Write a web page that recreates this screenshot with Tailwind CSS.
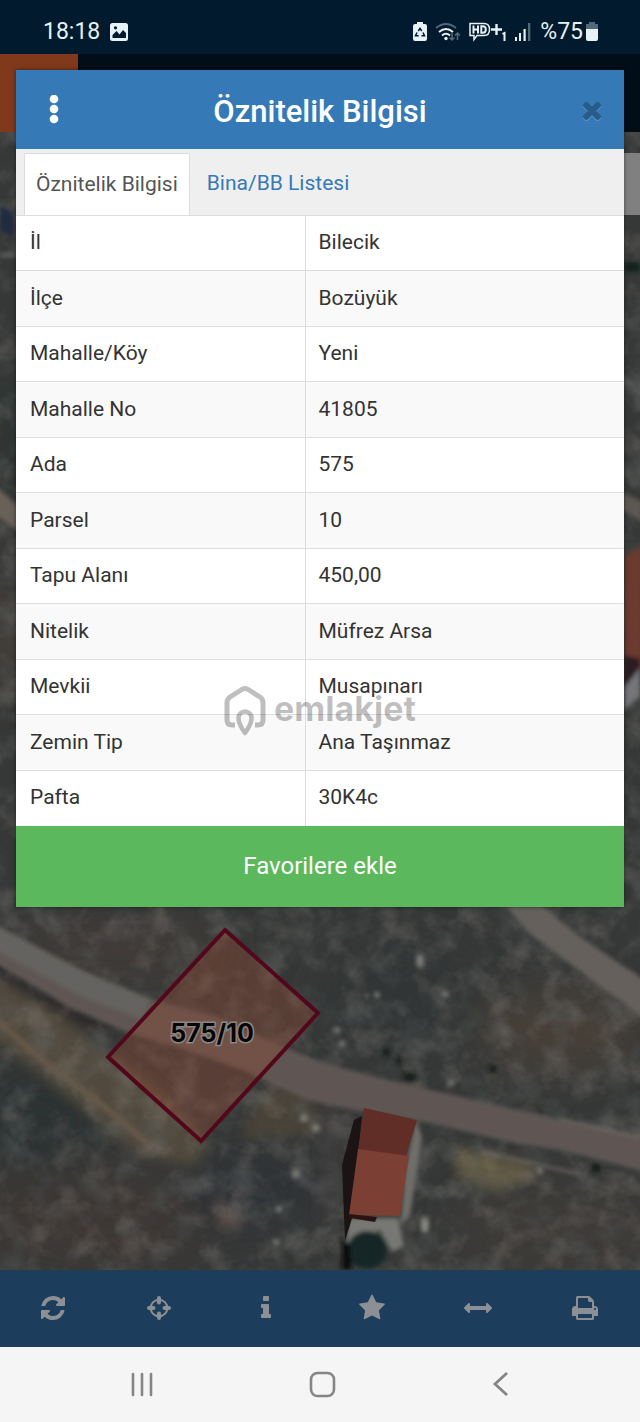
<!DOCTYPE html>
<html lang="tr">
  <head>
    <meta charset="UTF-8" />
    <meta name="viewport" content="width=device-width, initial-scale=1.0" />
    <script src="https://cdn.jsdelivr.net/npm/@tailwindcss/browser@4"></script>
    <title>Öznitelik Bilgisi</title>
  </head>
  <body class="relative min-h-screen flex flex-col bg-[#343635] font-[Roboto,sans-serif]">
    <!-- Status bar -->
    <header class="h-[54px] bg-[#011a2d] text-[#e8f1f6] flex items-center justify-between pl-[43px] pr-[42px] pt-[10px]">
      <div class="flex items-center gap-[10px]">
        <span class="text-[23px] leading-6">18:18</span>
        <svg class="w-[18px] h-[18px]" viewBox="0 0 18 18">
          <rect width="18" height="18" rx="2.500" fill="#e8f1f6" />
          <path d="M2.500 15v-3l4-4 3 3.500 3.500-4.500 3 3v5z" fill="#011a2d" />
          <circle cx="5.500" cy="4.800" r="1.600" fill="#011a2d" />
        </svg>
      </div>
      <div class="flex items-center">
        <svg class="w-[14px] h-[20px] mr-[8px]" viewBox="0 0 14 20">
          <path d="M4 0h6v2h2a2 2 0 0 1 2 2v13a2 2 0 0 1-2 2H2a2 2 0 0 1-2-2V4a2 2 0 0 1 2-2h2z" fill="#e8f1f6" />
          <path d="M5.300 9l1.700-2.700 1.700 2.700M10 10.500l1.500 3.200H8.500M5.700 13.700H2.500L4 10.500" fill="none" stroke="#011a2d" stroke-width="1.500" />
        </svg>
        <svg class="w-[26px] h-[20px] mr-[8px]" viewBox="0 0 26 20" fill="none" stroke-width="2">
          <path d="M1 6q10-8 20 0" stroke="#52697a" />
          <path d="M4 10q7-6 14 0M7 13.500q4-3.500 8 0" stroke="#e8f1f6" />
          <circle cx="11" cy="16.500" r="1.700" fill="#e8f1f6" />
          <path d="M17 11v7M14.500 15.500l2.500 2.500 2.500-2.500M22.500 18v-7M20 13.500l2.500-2.500 2.500 2.500" stroke="#52697a" stroke-width="1.500" />
        </svg>
        <svg class="w-[38px] h-[20px] mr-[7px]" viewBox="0 0 38 20" fill="none" stroke="#e8f1f6" stroke-width="1.500">
          <path d="M1 1.500h14q5.500 0 5.500 6t-5.500 6H8l-3 4v-4H1z" />
          <path d="M4.500 3.500v8M9 3.500v8M4.500 7.500H9M12.300 4.300v6.400h1.500q3 0 3-3.200t-3-3.200z" stroke-width="2" />
          <path d="M22 7.500h11M27.500 2v11" stroke-width="2.400" />
          <path d="M33.500 12l2-1v8" stroke-width="2" />
        </svg>
        <svg class="w-[17px] h-[20px] mr-[9px]" viewBox="0 0 17 20">
          <path d="M1 15h2v4H1zM5 11h2v8H5zM9.500 7h2.200v12H9.500z" fill="#e8f1f6" />
          <path d="M14 1h2.300v18H14z" fill="#52697a" />
        </svg>
        <span class="text-[23px] leading-6 mr-[3px]">%75</span>
        <svg class="w-[12px] h-[20px]" viewBox="0 0 12 20">
          <path d="M3 0h6v2h3v5H0V2h3z" fill="#52697a" />
          <path d="M0 7h12v10a2 2 0 0 1-2 2H2a2 2 0 0 1-2-2z" fill="#e8f1f6" />
        </svg>
      </div>
    </header>

    <!-- App bar, dimmed behind the dialog -->
    <div class="h-[78px] bg-[#010e18] flex">
      <div class="w-[78px] bg-[#80391b]"></div>
    </div>

    <!-- Map -->
    <main class="relative flex-1">
      <svg class="block w-full h-full" viewBox="0 132 640 1138" preserveAspectRatio="xMidYMid slice">
        <defs>
          <filter id="soft" x="-20%" y="-20%" width="140%" height="140%"><feGaussianBlur stdDeviation="2" /></filter>
          <filter id="scrub" x="-20%" y="-20%" width="140%" height="140%"><feGaussianBlur stdDeviation="6" /></filter>
          <filter id="haze" x="-50%" y="-50%" width="200%" height="200%"><feGaussianBlur stdDeviation="22" /></filter>
          <filter id="light" x="0" y="0" width="100%" height="100%">
            <feTurbulence type="fractalNoise" baseFrequency="0.035" numOctaves="4" seed="7" />
            <feColorMatrix values="0 0 0 0 .4  0 0 0 0 .36  0 0 0 0 .32  1.4 0 0 0 -.65" />
          </filter>
          <filter id="dark" x="0" y="0" width="100%" height="100%">
            <feTurbulence type="fractalNoise" baseFrequency="0.035" numOctaves="4" seed="21" />
            <feColorMatrix values="0 0 0 0 .12  0 0 0 0 .14  0 0 0 0 .14  1.6 0 0 0 -.75" />
          </filter>
        </defs>
        <rect y="132" width="640" height="1138" fill="#363837" />
        <g filter="url(#haze)">
          <ellipse cx="120" cy="950" rx="110" ry="35" fill="#3f3a38" />
          <ellipse cx="560" cy="1030" rx="80" ry="40" fill="#464139" />
          <ellipse cx="400" cy="1000" rx="80" ry="60" fill="#323635" />
          <ellipse cx="40" cy="1120" rx="60" ry="50" fill="#2c3233" />
          <ellipse cx="90" cy="1220" rx="120" ry="50" fill="#3d3835" />
          <ellipse cx="250" cy="1190" rx="70" ry="40" fill="#2e3335" />
          <ellipse cx="560" cy="1230" rx="110" ry="50" fill="#3e3b38" />
          <ellipse cx="0" cy="640" rx="16" ry="60" fill="#4b423a" />
          <ellipse cx="0" cy="440" rx="16" ry="60" fill="#26302f" />
        </g>
        <!-- scrub -->
        <g filter="url(#scrub)">
          <path d="M-14 974l69 40 60 42 50 36 44 50-14 24-59-12-50-42-54-44-46-34z" fill="#51483c" />
          <path d="M450 1146l30 8 50 8 4 14-36 16-38-14z" fill="#5e5741" />
          <path d="M260 1090l40-14 22 50-30 12-50 0z" fill="#484239" />
          <path d="M323 1105l24 12-9 75-18 30z" fill="#3c3b3a" />
          <path d="M215 1200l12 6 14 20-8 6-16-12z" fill="#5b4d46" />
          <path d="M-10 956l56 24 50 30 15 14-6 12-40-18-75-46z" fill="#2d2c2a" />
        </g>
        <rect y="132" width="640" height="1138" filter="url(#light)" opacity=".45" />
        <rect y="132" width="640" height="1138" filter="url(#dark)" opacity=".5" />
        <g filter="url(#soft)">
          <!-- left and right edges -->
          <path d="M0 205l14 8v24l-14-6z" fill="#20293f" />
          <path d="M0 255h16" stroke="#5c605f" stroke-width="4" />
          <path d="M-4 486l24 22v24l-24-16z" fill="#696057" />
          <path d="M624 262h16v10h-16z" fill="#14211d" />
          <path d="M622 492l20 10v20l-20-12z" fill="#5c5851" />
          <path d="M624 556l18-10v124l-18 2z" fill="#6b3a2f" />
          <path d="M624 655l16 4v20l-16 8z" fill="#2b1e20" />
          <path d="M640 668v28l-16 14v-22z" fill="#75757a" />
          <!-- roads -->
          <path d="M-10 922l91 48 60 27 70 18 109 47 80 21 75 17 100 24 75 14v35l-85-22-60-10-70-17-80-14-48-10-62-29-55-20-59-17-60-26-81-48z" fill="#5e5652" />
          <path d="M-10 922l91 48 70 29-9 20-61-23-91-49z" fill="#65635e" />
          <path d="M500 900l36 0 40 34 68 46v38l-60-44-54-40z" fill="#65605b" />
          <path d="M-4 1020l50 43 60 45 42 36" fill="none" stroke="#66594a" stroke-width="6" />
          <path d="M560 1119l80 18M480 1152l100 22" stroke="#75706a" stroke-width="2" />
          <g fill="#7a7c77">
            <ellipse cx="420" cy="961" rx="4" ry="7" />
            <circle cx="377" cy="995" r="3" />
            <circle cx="367" cy="996" r="2" />
            <circle cx="445" cy="994" r="3" />
            <circle cx="337" cy="1030" r="3" />
            <circle cx="342" cy="1044" r="3" />
            <circle cx="451" cy="1083" r="3" />
            <circle cx="304" cy="1118" r="4" />
            <circle cx="316" cy="1128" r="4" />
            <circle cx="296" cy="1174" r="4" />
            <circle cx="279" cy="1209" r="3" />
            <circle cx="276" cy="1242" r="3" />
            <circle cx="540" cy="1171" r="3" />
          </g>
          <g fill="#131c19">
            <circle cx="386" cy="1052" r="4" />
            <circle cx="399" cy="1061" r="3" />
            <ellipse cx="410" cy="1077" rx="7" ry="4" />
            <circle cx="493" cy="1069" r="4" />
            <circle cx="596" cy="1168" r="5" />
          </g>
        </g>
        <!-- house -->
        <g filter="url(#soft)">
          <path d="M416 1118l6 20-12 78-10 10 6-60z" fill="#706e69" />
          <path d="M348 1218h50l6 28-12 6-12-22-34 16z" fill="#777873" />
          <ellipse cx="367" cy="1250" rx="20" ry="19" fill="#172525" />
          <path d="M342 1236l8 10 2 24h-10z" fill="#0d1111" />
          <ellipse cx="425" cy="1225" rx="4" ry="8" fill="#858782" />
        </g>
        <path d="M362 1116l-8 4-12 45 3 76 8-26z" fill="#1b1314" />
        <path d="M364 1108l53 12-11 36-48-6z" fill="#602e27" />
        <path d="M358 1149l51 7-9 60-51-1z" fill="#7b4033" />
        <path d="M349 1214l28 3-2 5-25-4z" fill="#291315" />
        <!-- parcel -->
        <path d="M225 930l93 83-117 128-93-84z" fill="#904a35" fill-opacity=".38" stroke="#52071b" stroke-width="4" />
        <text x="212" y="1042" text-anchor="middle" class="font-[Inter,sans-serif] text-[25px] font-bold" fill="#080606" stroke="#8c8784" stroke-width="3" paint-order="stroke">575/10</text>
      </svg>
      <button type="button" aria-label="Katmanlar" class="absolute right-0 top-[21px] w-[48px] h-[62px] bg-[#808080]"></button>
    </main>

    <!-- Map tools -->
    <nav class="h-[77px] bg-[#1c3d5b] text-[#8c8f94] grid grid-cols-6 place-items-center pr-[2px] pb-[2px]">
      <button type="button" aria-label="Yenile">
        <svg class="w-[28px] h-[28px]" viewBox="0 0 1792 1792" fill="currentColor"><path d="M1639 1056q0 5-1 7-64 268-268 434.500t-478 166.500q-146 0-282.500-55t-243.500-157l-129 129q-19 19-45 19t-45-19-19-45v-448q0-26 19-45t45-19h448q26 0 45 19t19 45-19 45l-137 137q71 66 161 102t187 36q134 0 250-65t186-179q11-17 53-117 8-23 30-23h192q13 0 22.500 9.500t9.500 22.500zm25-800v448q0 26-19 45t-45 19h-448q-26 0-45-19t-19-45 19-45l138-138q-148-137-349-137-134 0-250 65t-186 179q-11 17-53 117-8 23-30 23h-199q-13 0-22.500-9.500t-9.500-22.500v-7q65-268 270-434.500t480-166.500q146 0 284 55.500t245 156.500l130-129q19-19 45-19t45 19 19 45z" /></svg>
      </button>
      <button type="button" aria-label="Konumum">
        <svg class="w-[28px] h-[28px]" viewBox="0 0 28 28" fill="none" stroke="currentColor">
          <circle cx="14" cy="14" r="8.300" stroke-width="2" />
          <path d="M14 4v4.500M14 19.500v4.500M4 14h4.500M19.500 14h4.500" stroke-width="4" stroke-linecap="round" />
        </svg>
      </button>
      <button type="button" aria-label="Bilgi">
        <svg class="w-[28px] h-[28px]" viewBox="0 0 1792 1792" fill="currentColor"><path d="M1216 1344v128q0 26-19 45t-45 19h-512q-26 0-45-19t-19-45v-128q0-26 19-45t45-19h64v-384h-64q-26 0-45-19t-19-45v-128q0-26 19-45t45-19h384q26 0 45 19t19 45v576h64q26 0 45 19t19 45zm-128-1152v192q0 26-19 45t-45 19h-256q-26 0-45-19t-19-45v-192q0-26 19-45t45-19h256q26 0 45 19t19 45z" /></svg>
      </button>
      <button type="button" aria-label="Favoriler">
        <svg class="w-[28px] h-[28px]" viewBox="0 0 1792 1792" fill="currentColor"><path d="M1728 647q0 22-26 48l-363 354 86 500q1 7 1 20 0 21-10.500 35.500t-30.500 14.500q-19 0-40-12l-449-236-449 236q-22 12-40 12-21 0-31.500-14.500t-10.500-35.500q0-6 2-20l86-500-364-354q-25-27-25-48 0-37 56-46l502-73 225-455q19-41 49-41t49 41l225 455 502 73q56 9 56 46z" /></svg>
      </button>
      <button type="button" aria-label="Ölçüm">
        <svg class="w-[28px] h-[28px]" viewBox="0 0 1792 1792" fill="currentColor"><path d="M1792 896q0 26-19 45l-256 256q-19 19-45 19t-45-19-19-45v-128h-1024v128q0 26-19 45t-45 19-45-19l-256-256q-19-19-19-45t19-45l256-256q19-19 45-19t45 19 19 45v128h1024v-128q0-26 19-45t45-19 45 19l256 256q19 19 19 45z" /></svg>
      </button>
      <button type="button" aria-label="Yazdır">
        <svg class="w-[28px] h-[28px]" viewBox="0 0 1792 1792" fill="currentColor"><path d="M448 1536h896v-256h-896v256zm0-640h896v-384h-160q-40 0-68-28t-28-68v-160h-640v640zm1152 64q0-26-19-45t-45-19-45 19-19 45 19 45 45 19 45-19 19-45zm128 0v416q0 13-9.500 22.500t-22.500 9.500h-224v160q0 40-28 68t-68 28h-960q-40 0-68-28t-28-68v-160h-224q-13 0-22.500-9.500t-9.500-22.500v-416q0-79 56.500-135.500t135.500-56.500h64v-544q0-40 28-68t68-28h672q40 0 88 20t76 48l152 152q28 28 48 76t20 88v256h64q79 0 135.500 56.500t56.500 135.500z" /></svg>
      </button>
    </nav>

    <!-- Phone navigation -->
    <footer class="h-[75px] bg-[#f5f5f5] text-[#858585] flex items-center justify-between pl-[128px] pr-[125px] pb-[2px]">
      <button type="button" aria-label="Son uygulamalar">
        <svg class="w-[28px] h-[28px]" viewBox="0 0 28 28" stroke="currentColor" stroke-width="2.600" stroke-linecap="round"><path d="M5 4v21M14 4v21M23 4v21" /></svg>
      </button>
      <button type="button" aria-label="Ana ekran">
        <svg class="w-[28px] h-[28px]" viewBox="0 0 28 28" fill="none" stroke="currentColor" stroke-width="2.600"><rect x="3" y="3" width="23" height="23" rx="6.500" /></svg>
      </button>
      <button type="button" aria-label="Geri">
        <svg class="w-[28px] h-[28px]" viewBox="0 0 28 28" fill="none" stroke="currentColor" stroke-width="2.800"><path d="M20 3L8 14l12 11" /></svg>
      </button>
    </footer>

    <!-- Attribute dialog -->
    <section role="dialog" aria-labelledby="dialogTitle" class="absolute inset-x-4 top-[70px] bg-white shadow-[0_0_4px_rgba(0,0,0,0.5)]">
      <div class="h-[79px] bg-[#357ab7] flex items-center justify-between px-[18px]">
        <button type="button" aria-label="Menü" class="w-10 flex justify-center">
          <svg class="w-[10px] h-[30px]" viewBox="0 0 10 30" fill="#fff"><circle cx="5" cy="4" r="4.300" /><circle cx="5" cy="14" r="4.300" /><circle cx="5" cy="24" r="4.300" /></svg>
        </button>
        <h1 id="dialogTitle" class="text-white text-[31px] leading-9 font-medium pt-1">Öznitelik Bilgisi</h1>
        <button type="button" aria-label="Kapat" class="w-10 flex justify-end text-[#285c8a]">
          <svg class="w-[28px] h-[28px] drop-shadow-[0_1px_0_#5f9bcc]" viewBox="0 0 1792 1792" fill="currentColor"><path d="M1490 1322q0 40-28 68l-136 136q-28 28-68 28t-68-28l-294-294-294 294q-28 28-68 28t-68-28l-136-136q-28-28-28-68t28-68l294-294-294-294q-28-28-28-68t28-68l136-136q28-28 68-28t68 28l294 294 294-294q28-28 68-28t68 28l136 136q28 28 28 68t-28 68l-294 294 294 294q28 28 28 68z" /></svg>
        </button>
      </div>
      <div role="tablist" class="h-[66px] bg-[#efefef] flex items-stretch pt-1 pl-2 text-[21px] leading-6">
        <button type="button" role="tab" aria-selected="true" class="bg-white border border-b-0 border-[#ddd] text-[#555] px-[11px] pb-[2px]">Öznitelik Bilgisi</button>
        <button type="button" role="tab" aria-selected="false" class="text-[#357ab7] px-[17px] pb-[2px]">Bina/BB Listesi</button>
      </div>
      <table class="w-full table-fixed border-collapse text-[21px] leading-6 text-[#333]">
        <tbody class="[&_tr]:h-[55px] [&_tr:nth-child(even)]:h-[56px] [&_tr:nth-child(even)]:bg-[#f9f9f9] [&_tr]:border-t [&_tr]:border-[#ddd] [&_th]:w-[289px] [&_th]:font-normal [&_th]:text-left [&_th]:pl-[14px] [&_th]:pb-[2px] [&_td]:pb-[2px] [&_td]:pl-[13px] [&_td]:border-l [&_td]:border-[#ddd]">
          <tr><th scope="row">İl</th><td>Bilecik</td></tr>
          <tr><th scope="row">İlçe</th><td>Bozüyük</td></tr>
          <tr><th scope="row">Mahalle/Köy</th><td>Yeni</td></tr>
          <tr><th scope="row">Mahalle No</th><td>41805</td></tr>
          <tr><th scope="row">Ada</th><td>575</td></tr>
          <tr><th scope="row">Parsel</th><td>10</td></tr>
          <tr><th scope="row">Tapu Alanı</th><td>450,00</td></tr>
          <tr><th scope="row">Nitelik</th><td>Müfrez Arsa</td></tr>
          <tr><th scope="row">Mevkii</th><td>Musapınarı</td></tr>
          <tr><th scope="row">Zemin Tip</th><td>Ana Taşınmaz</td></tr>
          <tr><th scope="row">Pafta</th><td>30K4c</td></tr>
        </tbody>
      </table>
      <button type="button" class="block w-full h-[81px] bg-[#5cb85c] text-white text-2xl">Favorilere ekle</button>
    </section>

    <!-- Watermark -->
    <div class="absolute inset-x-0 top-[685px] flex items-start justify-center gap-[8px] text-black/25 pointer-events-none">
      <svg class="w-[42px] h-[52px]" viewBox="0 0 42 52" fill="none" stroke="currentColor" stroke-width="5" stroke-linejoin="round">
        <path d="M11 40H8q-5 0-5-5V18q0-4 3-6L17 5q4-3 8 0l11 7q3 2 3 6v17q0 5-5 5h-3" />
        <path d="M21 48q-6.500-9-6.500-15a6.500 6.500 0 0 1 13 0q0 6-6.500 15z" stroke-width="4.500" />
      </svg>
      <span class="font-[Inter,sans-serif] text-[34px] leading-[48px] font-bold">emlakjet</span>
    </div>
  </body>
</html>
